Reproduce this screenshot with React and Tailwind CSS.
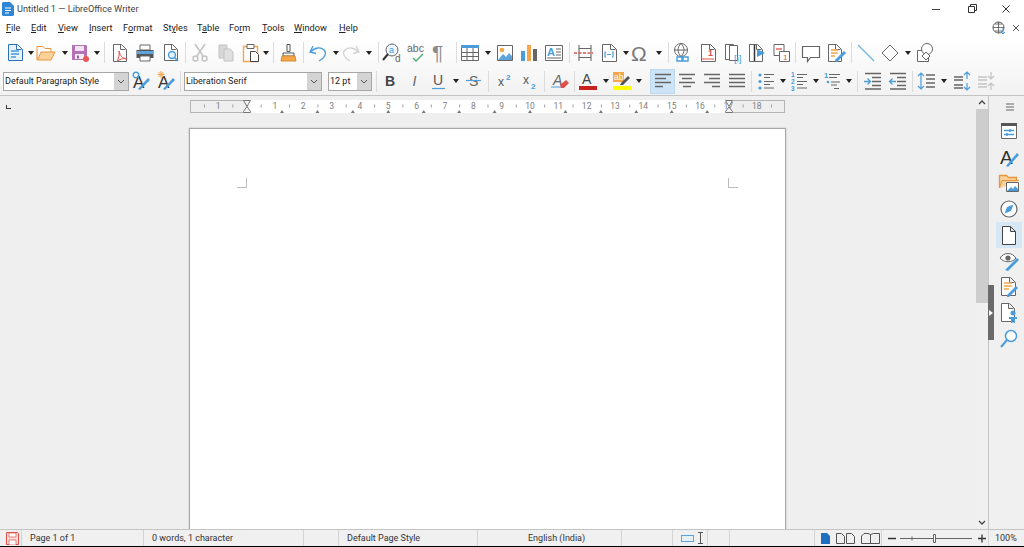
import React from "react";

const FONT = "font-['Roboto','Open_Sans',sans-serif]";
const BLUE = "#4a9cdb";
const GRAY = "#666666";
const LIGHT = "#c2c2c2";
const ORANGE = "#f5a54a";
const RED = "#e0504a";

const ML = {
  0: "",
  1: "ml-px",
  2: "ml-0.5",
  3: "ml-[3px]",
  4: "ml-1",
  5: "ml-[5px]",
  6: "ml-1.5",
  7: "ml-[7px]",
  8: "ml-2",
};

function S({ children }) {
  return (
    <svg viewBox="0 0 22 22" fill="none" className="h-[22px] w-[22px] shrink-0">
      {children}
    </svg>
  );
}

const T = ({ x, y, s = 10, fill = GRAY, w = 400, st = "normal", children }) => (
  <text x={x} y={y} fontSize={s} fill={fill} fontWeight={w} fontStyle={st} fontFamily="Liberation Sans, sans-serif">
    {children}
  </text>
);

const Doc = ({ x = 4, y = 2, w = 13, h = 17, c = GRAY, f = "#fff" }) => (
  <path d={`M${x + .5} ${y + .5}h${w - 5}l5 5v${h - 6}h-${w}z M${x + w - 5.5} ${y + .5}v5h5`} stroke={c} fill={f} />
);

const ICONS = {
  new: (
    <S>
      <Doc x={4} y={2} w={14} h={17} c="#2d72b8" f="#e5f1fb" />
      <path d="M7 9h8M7 12h8M7 15h5" stroke={BLUE} strokeWidth="1.5" />
    </S>
  ),
  open: (
    <S>
      <path d="M2 6.5V18h14l4-8H6L3 17" stroke="#e8953c" fill="#fbd29a" />
      <path d="M2 6.5V4.5h6l2 2h6V10" stroke="#e8953c" />
    </S>
  ),
  save: (
    <S>
      <path d="M3 3h14l1 1v14H3z" fill="#b573b5" />
      <path d="M6 4h9v5H6z" fill="#f2e3f2" />
      <path d="M6 12h9v5H6z" fill="#f6eef6" />
      <path d="M8 13.500h2v3H8z" fill="#9c5a9c" />
      <circle cx="17" cy="17" r="3" fill="#ea5a52" />
    </S>
  ),
  pdf: (
    <S>
      <Doc x={4} y={2} w={13} h={18} />
      <path d="M10 9c1 5 3 7 8 8-4-1-8 0-10 3 1-3 3-7 2-11z" stroke={RED} />
    </S>
  ),
  print: (
    <S>
      <path d="M6 3h10v5H6z" fill="#fff" stroke={GRAY} />
      <path d="M2.5 8h17v8h-17z" fill="#555" />
      <path d="M3 9h16v3H3z" fill="#5da4dc" />
      <path d="M6 14h10v5H6z" fill="#fff" stroke={GRAY} />
    </S>
  ),
  preview: (
    <S>
      <Doc x={4} y={2} w={13} h={17} />
      <circle cx="12" cy="13" r="3.5" stroke={BLUE} fill="#e5f1fb" strokeWidth="1.4" />
      <path d="M14.5 15.5l3.5 3.5" stroke={BLUE} strokeWidth="1.6" />
    </S>
  ),
  cut: (
    <S>
      <path d="M6 2l8 12M16 2L8 14" stroke={LIGHT} strokeWidth="1.5" />
      <circle cx="6.5" cy="16.5" r="2.5" stroke={LIGHT} strokeWidth="1.4" />
      <circle cx="15.5" cy="16.5" r="2.5" stroke={LIGHT} strokeWidth="1.4" />
    </S>
  ),
  copy: (
    <S>
      <path d="M4 3h8v13H4z" fill="#d8d8d8" stroke={LIGHT} />
      <path d="M9 7h6l3 3v9H9z" fill="#e0e0e0" stroke={LIGHT} />
    </S>
  ),
  paste: (
    <S>
      <path d="M3.5 4.5h14v15h-14z" stroke={ORANGE} strokeWidth="1.4" fill="#fff" />
      <path d="M7 2.5h7v4H7z" fill="#fff" stroke={GRAY} />
      <path d="M10.5 9.5h5l3 3v7h-8z" fill="#fff" stroke="#444" />
    </S>
  ),
  clone: (
    <S>
      <path d="M9 2.5h3v7H9z" stroke="#555" fill="#fff" />
      <path d="M5 11h11v3H5z" stroke="#555" fill="#fff" />
      <path d="M4 14h13l1 5H3z" fill={ORANGE} stroke="#d98a30" />
    </S>
  ),
  undo: (
    <S>
      <path d="M6 4L3 10l6 1.5" stroke={BLUE} strokeWidth="1.3" />
      <path d="M3.5 10C8 5 14 5 17 8c3 3 1 8-5 11" stroke={BLUE} strokeWidth="1.3" />
    </S>
  ),
  redo: (
    <S>
      <path d="M16 4l3 6-6 1.5" stroke="#d2d2d2" strokeWidth="1.3" />
      <path d="M18.5 10C14 5 8 5 5 8c-3 3-1 8 5 11" stroke="#d2d2d2" strokeWidth="1.3" />
    </S>
  ),
  find: (
    <S>
      <circle cx="11" cy="8" r="6" stroke={GRAY} fill="#eef6fc" />
      <path d="M7 12l-5 6" stroke="#333" strokeWidth="2" />
      <T x={8} y={11} s={9} fill={BLUE}>a</T>
      <T x={14} y={20} s={10}>d</T>
    </S>
  ),
  spell: (
    <S>
      <T x={1} y={10} s={10.5}>abc</T>
      <path d="M7 16l3 3 7-7" stroke="#4caf68" strokeWidth="1.4" />
    </S>
  ),
  pilcrow: (
    <S>
      <T x={2} y={18} s={21} fill="#8a8a8a">¶</T>
    </S>
  ),
  table: (
    <S>
      <path d="M2.5 3.5h17v15h-17z" stroke={GRAY} fill="#fff" />
      <path d="M2 3h18v3H2z" fill={BLUE} />
      <path d="M3 10.500h16M3 14.500h16M8 6v12M14 6v12" stroke={GRAY} />
    </S>
  ),
  image: (
    <S>
      <path d="M3.5 3.5h15v15h-15z" stroke={GRAY} fill="#fff" />
      <circle cx="8" cy="8" r="2.3" fill={ORANGE} />
      <path d="M4 18l5-6 3 3 3-4 3 3v4z" fill="#5da4dc" />
    </S>
  ),
  chart: (
    <S>
      <path d="M3 9h4v10H3z" fill={BLUE} />
      <path d="M9 3h4v16H9z" fill={ORANGE} />
      <path d="M15 7h4v12h-4z" fill="#666" />
    </S>
  ),
  textbox: (
    <S>
      <path d="M2.5 3.5h17v15h-17z" stroke={GRAY} fill="#fff" />
      <T x={4} y={14} s={11} fill={BLUE} w={700}>A</T>
      <path d="M13 7h5M13 10h5M13 13h5M4 16h14" stroke={GRAY} />
    </S>
  ),
  pagebreak: (
    <S>
      <path d="M5 3v16M17 3v16M5 6.500h12M5 15.500h12" stroke={GRAY} strokeWidth="1.100" />
      <path d="M0 11h19" stroke={RED} strokeWidth="1.3" strokeDasharray="3 1.5" />
    </S>
  ),
  field: (
    <S>
      <Doc x={4} y={2} w={14} h={18} />
      <path d="M8 10H7v5h1M14 10h1v5h-1M9 12.5h4" stroke={BLUE} strokeWidth="1.2" />
    </S>
  ),
  omega: (
    <S>
      <T x={0} y={19} s={21} fill="#777">Ω</T>
    </S>
  ),
  link: (
    <S>
      <circle cx="10" cy="8" r="6.5" stroke={GRAY} fill="#fff" />
      <path d="M3.5 8h13M10 1.5c-4 4-4 9 0 13M10 1.5c4 4 4 9 0 13" stroke={GRAY} />
      <path d="M6 15h5v4H6zM12 15h5v4h-5z" stroke={BLUE} strokeWidth="1.4" fill="#fff" />
    </S>
  ),
  footnote: (
    <S>
      <Doc x={4} y={2} w={14} h={18} />
      <T x={11} y={14} s={9} fill={RED} w={700}>1</T>
      <path d="M5 17h12" stroke={RED} />
    </S>
  ),
  endnote: (
    <S>
      <path d="M2.5 2.5h8v15h-8z" stroke={GRAY} fill="#fff" />
      <path d="M6.5 3.5h8v15h-8z" stroke={GRAY} fill="#fff" />
      <T x={11} y={20} s={9.5} fill={BLUE}>[i]</T>
    </S>
  ),
  bookmark: (
    <S>
      <Doc x={3} y={2} w={13} h={18} />
      <path d="M8.5 3v16" stroke="#333" strokeWidth="1.5" />
      <path d="M11 7l8 4-8 4z" fill={BLUE} />
    </S>
  ),
  crossref: (
    <S>
      <path d="M3 2.5h10v11H3z" stroke={GRAY} fill="#fff" />
      <path d="M5 7h6" stroke={RED} strokeWidth="1.3" />
      <path d="M8.5 9.5h10v10h-10z" stroke={GRAY} fill="#fff" />
      <T x={12} y={18} s={8} fill={RED}>1</T>
    </S>
  ),
  comment: (
    <S>
      <path d="M2.5 4.5h17v11h-9l-3 4v-4h-5z" stroke={GRAY} strokeWidth="1.2" fill="#fff" />
    </S>
  ),
  track: (
    <S>
      <Doc x={3} y={2} w={13} h={18} />
      <path d="M6 8h7M6 11h7M6 14h4" stroke={ORANGE} strokeWidth="1.5" />
      <path d="M10 18l9-9 2 2-9 9h-2z" fill={BLUE} />
    </S>
  ),
  line: (
    <S>
      <path d="M3 3l16 16" stroke="#6fb2e4" strokeWidth="1.2" />
    </S>
  ),
  diamond: (
    <S>
      <path d="M11 3l8 8-8 8-8-8z" stroke={GRAY} fill="#fff" />
    </S>
  ),
  shapes: (
    <S>
      <path d="M3.5 8.5h11v11h-11z" stroke={GRAY} fill="#fff" />
      <circle cx="13" cy="7" r="5.5" stroke={GRAY} fill="#fff" />
      <path d="M12 10l4 4-4 4-4-4z" stroke={GRAY} fill="#fff" />
    </S>
  ),
  styleNew: (
    <S>
      <T x={3} y={18} s={17} fill="#333">A</T>
      <path d="M8 19l10-11 2 2L10 20z" fill={BLUE} />
      <circle cx="6" cy="5" r="2.800" stroke={BLUE} strokeWidth="1.4" />
    </S>
  ),
  styleAuto: (
    <S>
      <T x={3} y={18} s={17} fill="#333">A</T>
      <path d="M8 19l10-11 2 2L10 20z" fill={BLUE} />
      <path d="M6 1v7M2.5 4.5h7M3.5 2l5 5M8.5 2l-5 5" stroke={ORANGE} />
    </S>
  ),
  bold: <S><T x={6} y={16} s={14} fill="#444" w={700}>B</T></S>,
  italic: <S><T x={7.5} y={16} s={14} fill="#666" st="italic">I</T></S>,
  under: (
    <S>
      <T x={5} y={15} s={14} fill="#555">U</T>
      <path d="M4 18.5h13" stroke={BLUE} strokeWidth="1.2" />
    </S>
  ),
  strike: (
    <S>
      <T x={6} y={16} s={14} fill="#666">S</T>
      <path d="M3 10.5h15" stroke={BLUE} strokeWidth="1.2" />
    </S>
  ),
  sup: (
    <S>
      <T x={4} y={16} s={12} fill="#555">x</T>
      <T x={12} y={10} s={8} fill={BLUE} w={700}>2</T>
    </S>
  ),
  sub: (
    <S>
      <T x={4} y={14} s={12} fill="#555">x</T>
      <T x={12} y={19} s={8} fill={BLUE} w={700}>2</T>
    </S>
  ),
  clear: (
    <S>
      <T x={4} y={15} s={14} fill="#666" st="italic">A</T>
      <path d="M2 17h10" stroke={BLUE} />
      <path d="M11 15l6-5 3 3-5 5h-3z" fill={RED} />
    </S>
  ),
  color: (
    <S>
      <T x={5} y={14} s={14} fill="#444">A</T>
      <path d="M2 16h18v4H2z" fill="#c9211e" />
    </S>
  ),
  hilite: (
    <S>
      <path d="M2 2h11v10H2z" fill={ORANGE} />
      <T x={3} y={10} s={8.5} fill="#fff">ab</T>
      <path d="M10 13l7-7 2 2-7 7h-3z" fill="#555" />
      <path d="M2 16h18v4H2z" fill="#ffff00" />
    </S>
  ),
  left: <S><path d="M3 4.5h16M3 8.5h11M3 12.5h16M3 16.5h8" stroke={GRAY} strokeWidth="1.5" /></S>,
  center: <S><path d="M3 4.5h16M6 8.5h10M3 12.5h16M7 16.5h8" stroke={GRAY} strokeWidth="1.5" /></S>,
  right: <S><path d="M3 4.5h16M8 8.5h11M3 12.5h16M11 16.5h8" stroke={GRAY} strokeWidth="1.5" /></S>,
  justify: <S><path d="M3 4.5h16M3 8.5h16M3 12.5h16M3 16.5h16" stroke={GRAY} strokeWidth="1.5" /></S>,
  bullets: (
    <S>
      <path d="M9 4.5h10M9 7.5h6M9 11.5h10M9 14.5h6M9 18h10" stroke={GRAY} strokeWidth="1.2" />
      <circle cx="5" cy="5" r="1.6" fill={BLUE} />
      <circle cx="5" cy="11.5" r="1.6" fill={BLUE} />
      <circle cx="5" cy="18" r="1.6" fill={BLUE} />
    </S>
  ),
  numbers: (
    <S>
      <path d="M9 4.5h10M9 7.5h6M9 11.5h10M9 14.5h6M9 18h10" stroke={GRAY} strokeWidth="1.2" />
      <T x={3} y={7} s={6.5} fill={BLUE} w={700}>1</T>
      <T x={3} y={14} s={6.5} fill={BLUE} w={700}>2</T>
      <T x={3} y={21} s={6.5} fill={BLUE} w={700}>3</T>
    </S>
  ),
  outline: (
    <S>
      <T x={3} y={8} s={7.5} fill={BLUE} w={700}>1</T>
      <circle cx="7" cy="12" r="1.3" fill={BLUE} />
      <path d="M8 4.5h11M8 7.5h8M10 12h9M10 15h6M13 18.5h5" stroke={GRAY} strokeWidth="1.2" />
    </S>
  ),
  indent: (
    <S>
      <path d="M3 3.5h16M10 7.5h9M10 11.5h9M10 15.5h9M3 19h16" stroke={GRAY} strokeWidth="1.4" />
      <path d="M2 11.5h6M5.5 8.5l3 3-3 3" stroke={BLUE} strokeWidth="1.3" />
    </S>
  ),
  outdent: (
    <S>
      <path d="M3 3.5h16M10 7.5h9M10 11.5h9M10 15.5h9M3 19h16" stroke={GRAY} strokeWidth="1.4" />
      <path d="M9 11.5H3M5.5 8.5l-3 3 3 3" stroke={BLUE} strokeWidth="1.3" />
    </S>
  ),
  spacing: (
    <S>
      <path d="M11 5h9M11 9h9M11 13h9M11 17h9" stroke={GRAY} strokeWidth="1.5" />
      <path d="M6 3v16M3 6l3-3 3 3M3 16l3 3 3-3" stroke={BLUE} strokeWidth="1.2" />
    </S>
  ),
  incr: (
    <S>
      <path d="M3 7h9M3 10h9M3 15h9M3 18h9" stroke={GRAY} strokeWidth="1.4" />
      <path d="M16 2v7M13 5l3-3 3 3M16 13v7M13 17l3 3 3-3" stroke={BLUE} strokeWidth="1.2" />
    </S>
  ),
  decr: (
    <S>
      <path d="M3 7h9M3 10h9M3 14h9M3 17h9" stroke="#c4c4c4" strokeWidth="1.4" />
      <path d="M16 2v7M13 6l3 3 3-3M16 13v7M13 16l3-3 3 3" stroke="#c4c4c4" strokeWidth="1.2" />
    </S>
  ),
  props: (
    <S>
      <path d="M3.5 3.5h15v15h-15z" stroke={GRAY} fill="#fff" />
      <path d="M3 3h16v3H3z" fill="#555" />
      <path d="M6 10.5h10M6 14.5h10" stroke={BLUE} strokeWidth="1.3" />
      <path d="M12 9v3M9 13v3" stroke={BLUE} strokeWidth="1.5" />
    </S>
  ),
  styles: (
    <S>
      <T x={2} y={18} s={19} fill="#333">A</T>
      <path d="M8 20l11-13 2 2L10 21z" fill={BLUE} />
    </S>
  ),
  gallery: (
    <S>
      <path d="M1.5 16V3.5h7l2 2h8V9" stroke="#e8953c" strokeWidth="1.3" fill="#fbd29a" />
      <path d="M1.5 16L4 8.5h17" stroke="#e8953c" fill="#fbd29a" />
      <path d="M8.5 10.5h12v9h-12z" fill="#fff" stroke={GRAY} />
      <path d="M9 19l4-4 2 2 2-3 3 3v2z" fill={BLUE} />
    </S>
  ),
  navigator: (
    <S>
      <circle cx="11" cy="11" r="8" stroke={GRAY} strokeWidth="1.2" fill="#fff" />
      <path d="M15.5 6.5L13 13l-6.500 2.500L9 9z" fill={BLUE} />
    </S>
  ),
  page: (
    <S>
      <path d="M4.500 2.500h8l5 5v13h-13z M12.500 2.500v5h5" stroke="#444" fill="#fff" />
    </S>
  ),
  inspector: (
    <S>
      <path d="M2 8c4-6 12-6 16 0-4 5-12 5-16 0z" stroke={GRAY} fill="#fff" />
      <circle cx="10" cy="8" r="2.600" fill={GRAY} />
      <path d="M7 20l12-12 2 2L10 21z" fill={BLUE} />
    </S>
  ),
  docpen: (
    <S>
      <Doc x={3} y={1} w={14} h={19} />
      <path d="M6 7h8M6 10h8M6 13h5" stroke={ORANGE} strokeWidth="1.500" />
      <path d="M9 19l9-9 2 2-9 9H9z" fill={BLUE} />
    </S>
  ),
  docperson: (
    <S>
      <Doc x={3} y={1} w={13} h={19} />
      <circle cx="15" cy="11" r="2.500" fill={BLUE} />
      <path d="M11 15h8v2h-2v4h-1.500v-2h-1v2H13v-4h-2z" fill={BLUE} />
    </S>
  ),
  search: (
    <S>
      <circle cx="13" cy="8" r="5.500" stroke={BLUE} strokeWidth="1.500" fill="#fff" />
      <path d="M9 12l-6 7" stroke={BLUE} strokeWidth="2" />
    </S>
  ),
};

function Arrow({ m }) {
  return (
    <div className={"flex h-[22px] w-2 shrink-0 items-center justify-center " + ML[m]}>
      <div className="h-0 w-0 border-x-[3px] border-t-[4px] border-x-transparent border-t-[#222]" />
    </div>
  );
}

function Sep({ m }) {
  return <div className={"h-[21px] w-px shrink-0 bg-[#dcdcdc] " + ML[m]} />;
}

function Tool({ name, m, active }) {
  return (
    <div
      className={
        "flex shrink-0 items-center justify-center " +
        ML[m] +
        (active ? " h-[25px] w-[25px] border border-[#bcd9f0] bg-[#cde4f7]" : " h-[22px] w-[22px]")
      }
    >
      {ICONS[name]}
    </div>
  );
}

// [name, left margin]; "a" is a dropdown arrow, "|" a separator
const ROW1 = [
  ["new", 4], ["a", 1], ["open", 0], ["a", 4], ["save", 0], ["a", 2], ["|", 3],
  ["pdf", 4], ["print", 3], ["preview", 4], ["|", 3],
  ["cut", 3], ["copy", 4], ["paste", 3], ["a", 0], ["|", 3],
  ["clone", 4], ["|", 3],
  ["undo", 3], ["a", 3], ["redo", 0], ["a", 3], ["|", 5],
  ["find", 2], ["spell", 3], ["pilcrow", 2], ["|", 4],
  ["table", 2], ["a", 3], ["image", 2], ["chart", 2], ["textbox", 3], ["|", 4],
  ["pagebreak", 4], ["field", 2], ["a", 2], ["omega", 1], ["a", 2], ["|", 5],
  ["link", 2], ["footnote", 4], ["endnote", 4], ["bookmark", 1], ["crossref", 3], ["|", 2],
  ["comment", 4], ["track", 3], ["|", 4],
  ["line", 3], ["diamond", 2], ["a", 3], ["shapes", 2],
];

const ROW2A = [["styleNew", 1], ["styleAuto", 3], ["|", 3]];

const ROW2B = [
  ["|", 4],
  ["bold", 2], ["italic", 4], ["under", 1], ["a", 2], ["strike", 3], ["|", 3],
  ["sup", 5], ["sub", 3], ["|", 3],
  ["clear", 4], ["|", 3],
  ["color", 2], ["a", 3], ["hilite", 1], ["a", 2],
];

const ROW2C = [
  ["center", 1], ["right", 3], ["justify", 3], ["|", 3],
  ["bullets", 3], ["a", 2], ["numbers", 1], ["a", 2], ["outline", 1], ["a", 2], ["|", 4],
  ["indent", 4], ["outdent", 3], ["|", 3],
  ["spacing", 2], ["a", 3], ["incr", 3], ["decr", 2],
];

function Items({ list }) {
  return list.map(([name, m], i) => {
    if (name === "a") return <Arrow key={i} m={m} />;
    if (name === "|") return <Sep key={i} m={m} />;
    return <Tool key={i} name={name} m={m} />;
  });
}

function Combo({ text, className }) {
  return (
    <div className={"flex h-[19px] shrink-0 items-stretch border border-[#a6a6a6] bg-white " + className}>
      <span className="flex-1 truncate pl-px text-[9px] leading-[17px] text-[#222]">{text}</span>
      <span className="flex w-[14px] items-center justify-center bg-[#d4d4d4]">
        <svg viewBox="0 0 8 5" className="h-[5px] w-2" fill="none">
          <path d="M1 1l3 3 3-3" stroke="#555" />
        </svg>
      </span>
    </div>
  );
}

const MENU = [
  ["", "F", "ile", "w-[25px]"],
  ["", "E", "dit", "w-[27px]"],
  ["", "V", "iew", "w-[31px]"],
  ["", "I", "nsert", "w-[34px]"],
  ["F", "o", "rmat", "w-[40px]"],
  ["St", "y", "les", "w-[34px]"],
  ["T", "a", "ble", "w-[32px]"],
  ["Fo", "r", "m", "w-[33px]"],
  ["", "T", "ools", "w-[32px]"],
  ["", "W", "indow", "w-[45px]"],
  ["", "H", "elp", "w-[30px]"],
];

const RULER_NUMS = ["1", "", "1", "2", "3", "4", "5", "6", "7", "8", "9", "10", "11", "12", "13", "14", "15", "16", "17", "18"];

function Ruler() {
  const ticks = [];
  for (let i = -3; i <= 19 * 2; i++) {
    const x = 57 + i * 14.175;
    if (x > 0 && x < 595 && i % 2 !== 0) ticks.push(x);
  }
  const tabs = Array.from({ length: 13 }, (_, i) => 92 + i * 35.43);
  return (
    <div className="relative ml-[190px] mt-1 h-[13px] w-[595px] shrink-0 self-start">
      <div className="flex h-full">
        <div className="w-[57px] border border-r-0 border-[#b4b4b4] bg-[#efefef]" />
        <div className="w-[482px] bg-white" />
        <div className="w-[56px] border border-l-0 border-[#b4b4b4] bg-[#efefef]" />
      </div>
      <div className="absolute inset-0 flex pl-[14px]">
        {RULER_NUMS.map((n, i) => (
          <span key={i} className="w-[28.35px] shrink-0 text-center text-[8.5px] leading-[12px] text-[#808080]">
            {n}
          </span>
        ))}
      </div>
      <svg viewBox="0 0 595 13" className="absolute inset-0 h-[13px] w-[595px]" fill="none">
        {ticks.map((x, i) => (
          <path key={i} d={`M${x} 4.500v3`} stroke="#a0a0a0" />
        ))}
        {tabs.map((x, i) => (
          <path key={i} d={`M${x - 2} 13l2-3 2 3z`} fill="#777" />
        ))}
        <path d="M53.500 .500h7l-3.500 6 3.500 5v1h-7v-1l3.500-5z" stroke="#777" fill="#f4f4f4" />
        <path d="M535.500 .500h7l-3.500 6z" stroke="#777" fill="#f4f4f4" />
        <path d="M539 7l3.500 4.500v1h-7v-1z" stroke="#777" fill="#f4f4f4" />
      </svg>
    </div>
  );
}

function SideBar() {
  const list = ["props", "styles", "gallery", "navigator", "page", "inspector", "docpen", "docperson", "search"];
  return (
    <div className="relative flex w-[36px] shrink-0 flex-col border-l border-[#c4c4c4] bg-[#f0f0f0]">
      <div className="flex h-[22px] items-center justify-center pl-[7px]">
        <svg viewBox="0 0 10 8" className="h-2 w-2.5" fill="none">
          <path d="M1 1h8M1 4h8M1 7h8" stroke="#666" />
        </svg>
      </div>
      {list.map((name) => (
        <div
          key={name}
          className={
            "ml-[7px] flex h-[26px] w-[26px] items-center justify-center " +
            (name === "page" ? "bg-[#d6e8f6]" : "")
          }
        >
          {ICONS[name]}
        </div>
      ))}
      <div className="absolute -left-px top-[189px] flex h-[55px] w-[6px] items-center justify-center bg-[#6a6a6a]">
        <div className="h-0 w-0 border-y-[3px] border-l-[4px] border-y-transparent border-l-white" />
      </div>
    </div>
  );
}

function ScrollBar() {
  return (
    <div className="flex w-3 shrink-0 flex-col bg-[#f0f0f0]">
      <div className="flex h-[13px] items-center justify-center">
        <svg viewBox="0 0 8 5" className="h-[5px] w-2" fill="none">
          <path d="M1 4l3-3 3 3" stroke="#444" strokeWidth="1.300" />
        </svg>
      </div>
      <div className="h-[194px] bg-[#cdcdcd]" />
      <div className="flex-1" />
      <div className="flex h-[13px] items-center justify-center">
        <svg viewBox="0 0 8 5" className="h-[5px] w-2" fill="none">
          <path d="M1 1l3 3 3-3" stroke="#444" strokeWidth="1.300" />
        </svg>
      </div>
    </div>
  );
}

function StatusBar() {
  return (
    <div className="flex h-[18px] shrink-0 items-stretch border-b border-t border-b-black border-t-[#c4c4c4] bg-[#f0f0f0] text-[9px] leading-[16px] text-[#333]">
      <div className="flex w-[22px] items-center justify-end border-r border-[#d4d4d4] pr-0.5">
        <svg viewBox="0 0 13 13" className="h-[13px] w-[13px]" fill="none">
          <path d="M.5 .5h11l1 1v11H.5z" stroke="#e0504a" fill="#fbdcda" />
          <path d="M3 1h7v4H3zM3 8h7v5H3z" fill="#fff" stroke="#e0504a" strokeWidth=".7" />
        </svg>
      </div>
      <div className="w-[122px] border-r border-[#d4d4d4] pl-2">Page 1 of 1</div>
      <div className="w-[160px] border-r border-[#d4d4d4] pl-2">0 words, 1 character</div>
      <div className="w-[35px] border-r border-[#d4d4d4]" />
      <div className="w-[139px] border-r border-[#d4d4d4] pl-2">Default Page Style</div>
      <div className="w-[144px] border-r border-[#d4d4d4] pl-[50px]">English (India)</div>
      <div className="w-[51px] border-r border-[#d4d4d4]" />
      <div className="flex w-[35px] items-center gap-[3px] border-r border-[#d4d4d4] pl-2">
        <div className="h-[7px] w-[13px] border border-[#5da4dc] bg-[#e5f1fb]" />
        <svg viewBox="0 0 7 12" className="h-3 w-[7px]" fill="none">
          <path d="M1 .5h5M1 11.500h5M3.500 .5v11" stroke="#555" />
        </svg>
      </div>
      <div className="w-[22px] border-r border-[#d4d4d4]" />
      <div className="w-[85px] border-r border-[#d4d4d4]" />
      <div className="flex w-[67px] items-center gap-[6px] border-r border-[#d4d4d4] pl-1.5">
        <svg viewBox="0 0 9 11" className="h-[11px] w-[9px]"><path d="M0 0h6l3 3v8H0z" fill="#1e6fc0" /></svg>
        <svg viewBox="0 0 19 11" className="h-[11px] w-[19px]" fill="none">
          <path d="M.5 .5h5l3 3v7h-8zM10.500 .5h5l3 3v7h-8z" stroke="#555" />
        </svg>
        <svg viewBox="0 0 19 11" className="h-[11px] w-[19px]" fill="none">
          <path d="M9.500 1.500L7 .5H3L.5 3v7.500h18V.5h-6zM9.500 1.500v9" stroke="#555" />
        </svg>
      </div>
      <div className="flex w-[107px] items-center border-r border-[#d4d4d4] pl-1.5">
        <svg viewBox="0 0 100 11" className="h-[11px] w-[100px]" fill="none">
          <path d="M0 5.500h8M90 5.500h8M94 1.500v8" stroke="#333" strokeWidth="1.300" />
          <path d="M12 5.500h72M24 3.500v4" stroke="#666" />
          <path d="M45.500 1.500h2v8h-2z" stroke="#666" fill="#fff" />
        </svg>
      </div>
      <div className="flex-1 pl-[6px]">100%</div>
    </div>
  );
}

export default function App() {
  return (
    <div className={"flex h-[547px] w-[1024px] flex-col overflow-hidden bg-white " + FONT}>
      {/* title bar */}
      <div className="flex h-[18px] shrink-0 items-center pl-0.5 text-[9.2px] text-[#444]">
        <svg viewBox="0 0 12 14" className="h-3.5 w-3">
          <path d="M0 1l1-1h7l4 4v9l-1 1H1l-1-1z" fill="#2f86d4" />
          <path d="M3 6h6M3 8.500h6M3 11h4" stroke="#fff" />
        </svg>
        <span className="ml-[3px]">Untitled 1 — LibreOffice Writer</span>
        <div className="ml-auto flex items-center">
          <svg viewBox="0 0 120 12" className="h-3 w-[120px]" fill="none">
            <path d="M33 6.500h8" stroke="#444" />
            <path d="M69.500 3.500h6v6h-6zM71.500 3.500v-2h6v6h-2" stroke="#333" />
            <path d="M103.500 2.500l7 7M110.500 2.500l-7 7" stroke="#333" />
          </svg>
          <div className="w-[5px]" />
        </div>
      </div>

      {/* menu */}
      <div className="flex h-5 shrink-0 items-center pl-1.5 text-[9.2px] text-[#222]">
        {MENU.map(([a, b, c, w]) => (
          <span key={a + b + c} className={"shrink-0 " + w}>
            {a}
            <span className="underline">{b}</span>
            {c}
          </span>
        ))}
        <div className="ml-auto mr-1 flex items-center gap-[6px]">
          <svg viewBox="0 0 14 14" className="h-3.5 w-3.5" fill="none">
            <circle cx="6.500" cy="6.500" r="5.500" fill="#fff" stroke="#555" />
            <path d="M1 6.500h11M6.500 1v11M3 3h7M3 10h7" stroke="#555" strokeWidth=".8" />
            <path d="M11 7v6M9 11l2 2 2-2" stroke="#3f97d8" />
          </svg>
          <svg viewBox="0 0 8 8" className="h-2 w-2" fill="none">
            <path d="M1 1l6 6M7 1L1 7" stroke="#555" />
          </svg>
        </div>
      </div>

      {/* toolbars */}
      <div className="flex shrink-0 flex-col border-b border-[#c4c4c4] bg-gradient-to-b from-white to-[#f2f2f2]">
        <div className="flex h-[29px] items-center">
          <Items list={ROW1} />
        </div>
        <div className="flex h-[28px] items-center">
          <Combo text="Default Paragraph Style" className="ml-[3px] w-[126px]" />
          <Items list={ROW2A} />
          <Combo text="Liberation Serif" className="ml-[3px] w-[138px]" />
          <Combo text="12 pt" className="ml-1.5 w-[44px]" />
          <Items list={ROW2B} />
          <Tool name="left" m={7} active />
          <Items list={ROW2C} />
        </div>
      </div>

      {/* work area */}
      <div className="flex min-h-0 flex-1">
        <div className="relative flex min-w-0 flex-1 flex-col overflow-hidden bg-[#efefef]">
          <div className="absolute left-[6px] top-[9px] h-[4px] w-[5px] border-b border-l border-[#333]" />
          <Ruler />
          <div className="ml-[189px] mt-[15px] flex h-[500px] w-[597px] shrink-0 justify-between border border-[#a8a8a8] bg-white px-[47px] pt-[49px] shadow-[0_0_2px_#bdbdbd]">
            <div className="h-[10px] w-[10px] border-b border-r border-[#bdbdbd]" />
            <div className="h-[10px] w-[10px] border-b border-l border-[#bdbdbd]" />
          </div>
        </div>
        <ScrollBar />
        <SideBar />
      </div>

      <StatusBar />
    </div>
  );
}
